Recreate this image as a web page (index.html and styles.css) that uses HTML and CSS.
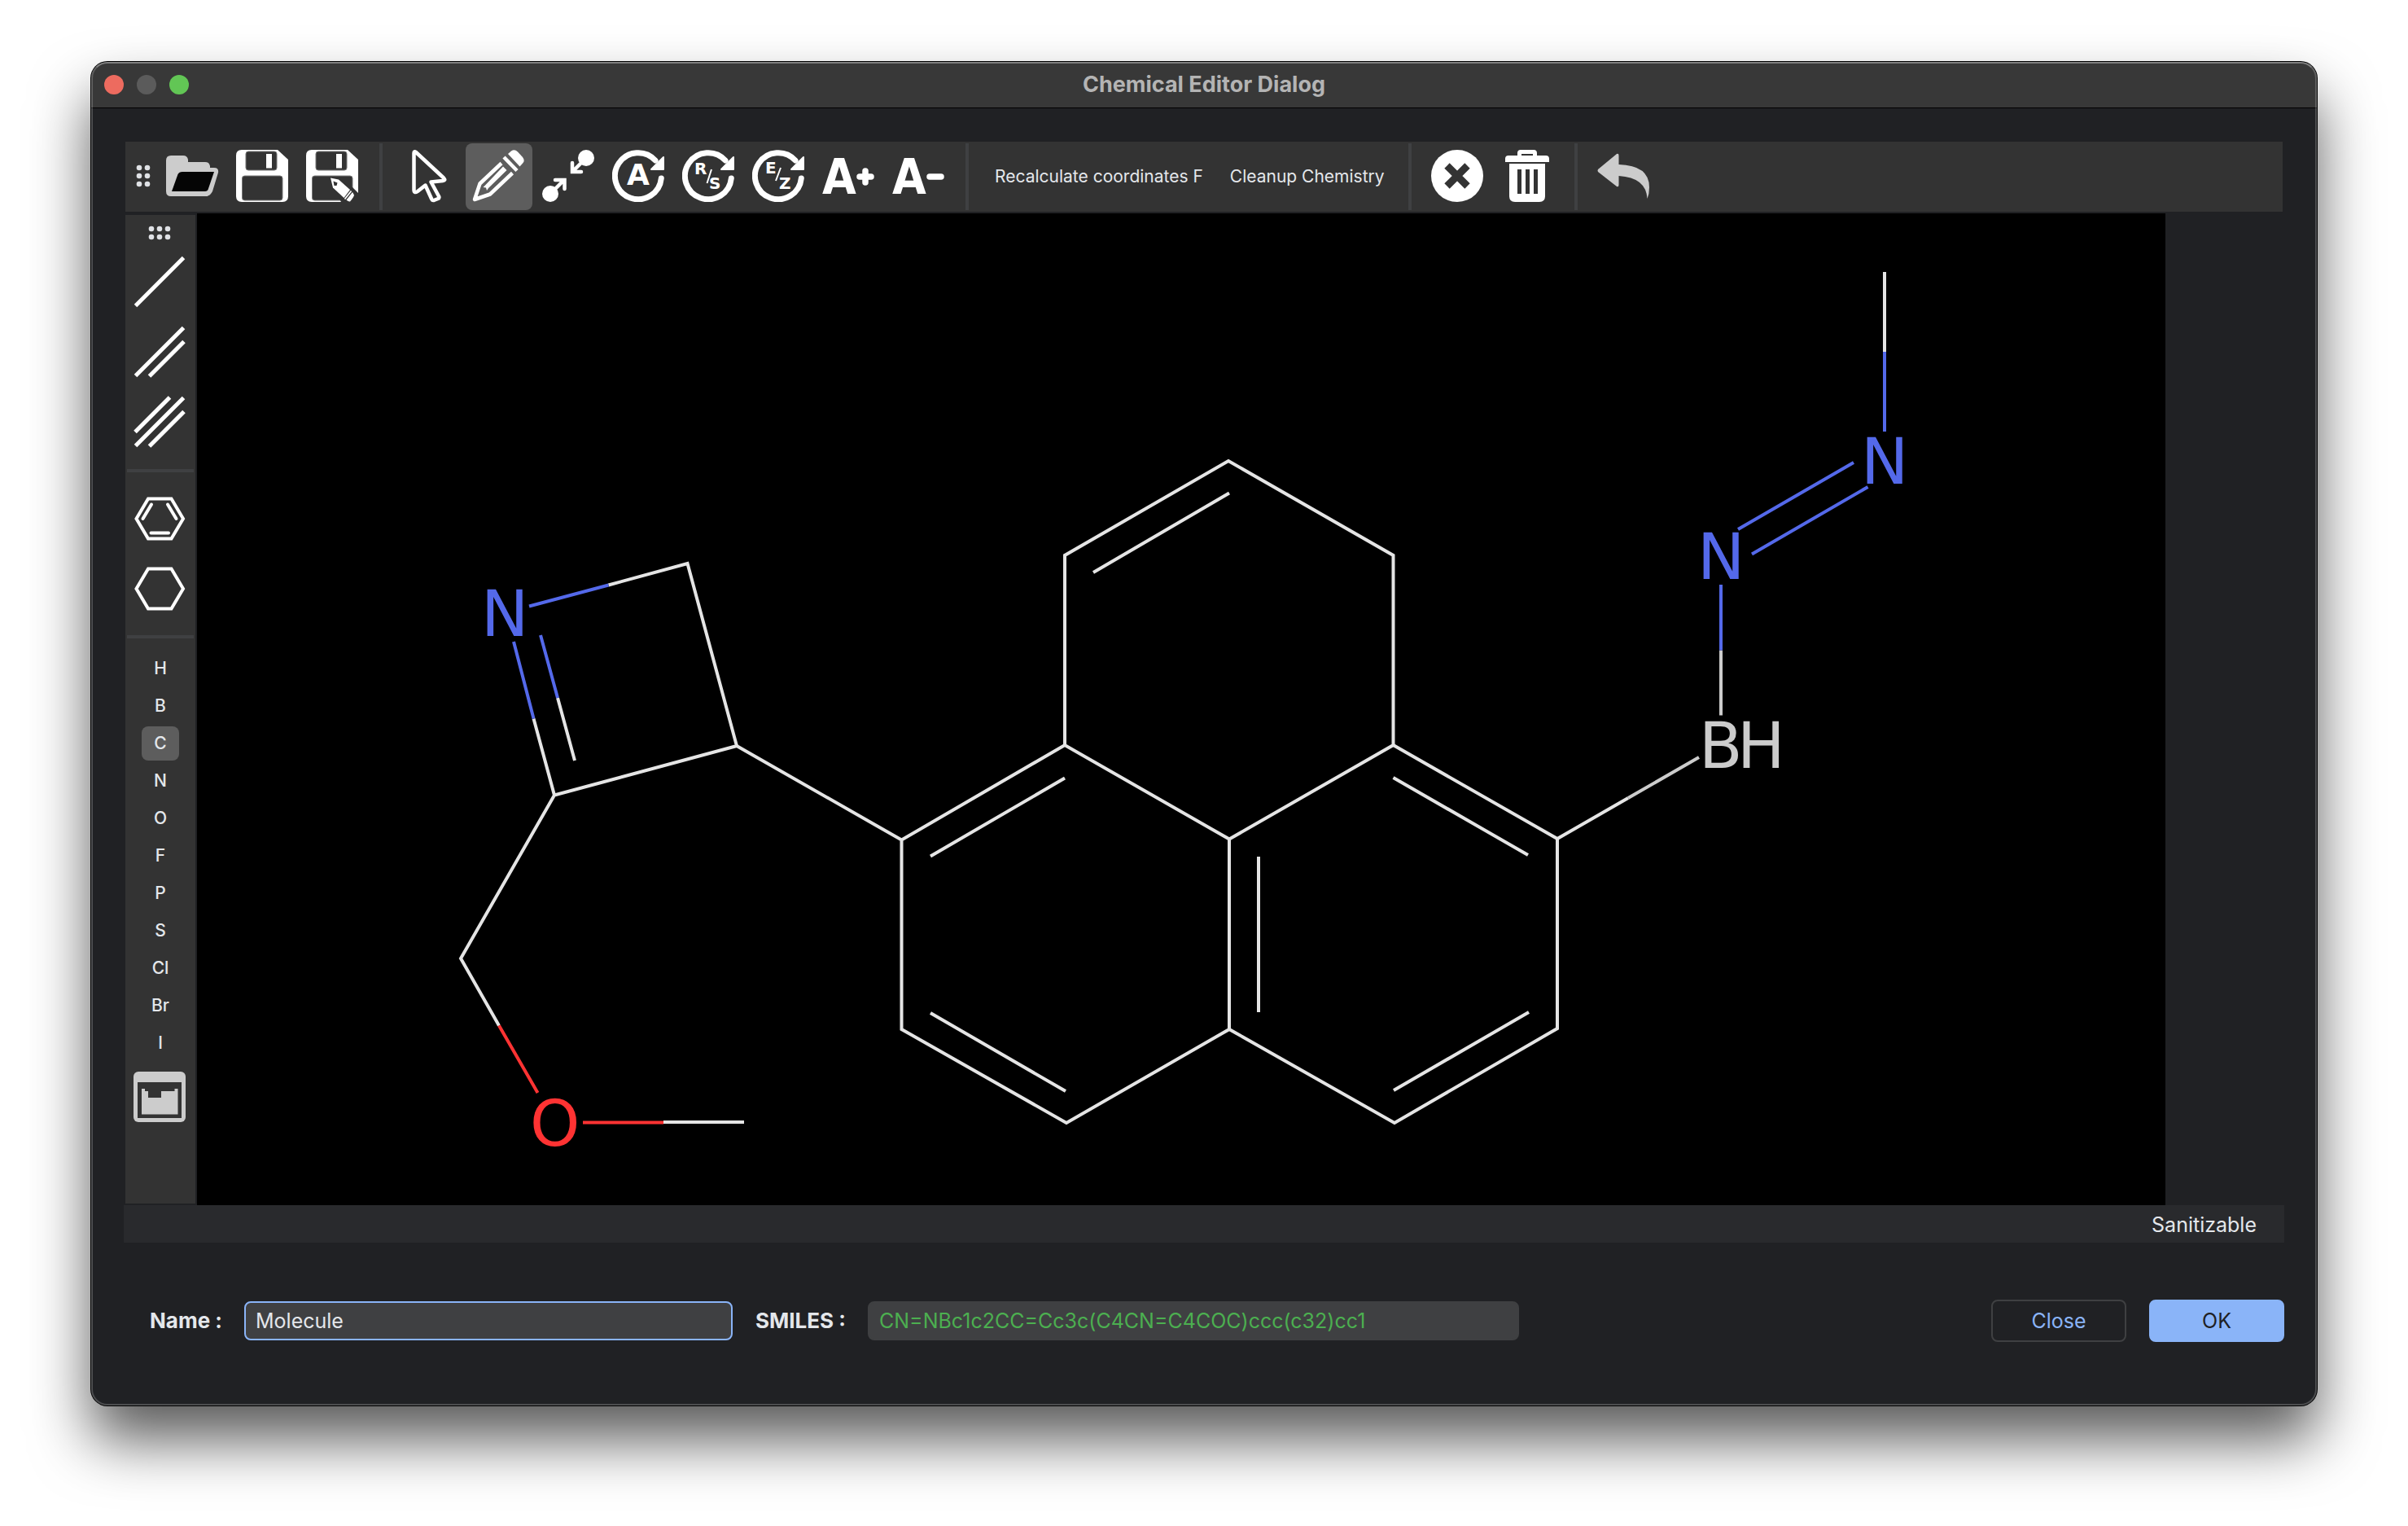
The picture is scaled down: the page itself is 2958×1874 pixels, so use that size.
FILE: index.html
```html
<!DOCTYPE html>
<html lang="en">
<head>
<meta charset="utf-8">
<meta name="viewport" content="width=device-width, initial-scale=1">
<title>Chemical Editor Dialog</title>
<link rel="stylesheet" href="styles.css">
</head>
<body>
<svg class="defs" aria-hidden="true">
  <defs>
    <symbol id="floppy" viewBox="0 0 64 64">
      <path fill="#fff" d="M7 0H51L64 12V57Q64 64 57 64H7Q0 64 0 57V7Q0 0 7 0Z"/>
      <rect x="12" y="2" width="38" height="23" rx="3" fill="#333" stroke="#777" stroke-width="1"/>
      <rect x="37" y="5" width="7" height="17.500" fill="#fff"/>
      <rect x="7.500" y="32" width="49.500" height="30" rx="3" fill="#333" stroke="#777" stroke-width="1"/>
    </symbol>
    <symbol id="rotate" viewBox="0 0 64 64">
      <path fill="none" stroke="#fff" stroke-width="7" stroke-linecap="round" d="M60.300 35A28.500 28.500 0 1 1 53 13"/>
      <path fill="#fff" stroke="#fff" stroke-width="2" stroke-linejoin="round" d="M63 9V24H48Z"/>
    </symbol>
  </defs>
</svg>

<main class="window">
  <header class="titlebar">
    <div class="lights">
      <button class="light light-close" aria-label="Close window"></button>
      <button class="light light-min" aria-label="Minimize window"></button>
      <button class="light light-zoom" aria-label="Zoom window"></button>
    </div>
    <h1 class="title">Chemical Editor Dialog</h1>
  </header>

  <div class="content">
    <div class="toolbar" role="toolbar" aria-label="Editing tools">
      <svg class="grip grip-row" viewBox="0 0 42 86" aria-hidden="true">
        <g fill="#dfe1e5"><circle cx="17" cy="32" r="3.300"/><circle cx="27" cy="32" r="3.300"/><circle cx="17" cy="42" r="3.300"/><circle cx="27" cy="42" r="3.300"/><circle cx="17" cy="52" r="3.300"/><circle cx="27" cy="52" r="3.300"/></g>
      </svg>
      <div class="group">
        <button class="tool" aria-label="Open">
          <svg class="icon" viewBox="0 0 64 64"><path fill="#ccc" d="M6 7H21Q26 7 27 12V15H48Q53 15 54 20V22H59Q65 22 64 28L57 51Q54 57 49 57H6Q0 57 0 51V13Q0 7 6 7Z"/><path fill="#050505" d="M20 27H59L51.500 49Q50.500 51 48 51H7L14.500 30Q16 27 20 27Z"/></svg>
        </button>
        <button class="tool" aria-label="Save"><svg class="icon"><use href="#floppy"/></svg></button>
        <button class="tool" aria-label="Save as">
          <svg class="icon" viewBox="0 0 64 64">
            <use href="#floppy"/>
            <path fill="#333" d="M30 35L57 46L64 53V64H43L40 58Z"/>
            <path fill="#fff" d="M30 34.500L40 36.500L54 49L46.500 59L33 46.500Z"/>
            <path fill="#333" d="M33.500 38.500L38.500 40.500L37.500 44L34.500 44Z"/>
            <path stroke="#fff" stroke-width="1.800" d="M55.500 50.500L47.500 60.500"/>
            <path fill="#fff" d="M57 52L59 55.500Q59 57.500 54 63.500Q52 64 49.500 61.500Z"/>
          </svg>
        </button>
      </div>
      <div class="sep"></div>
      <div class="group">
        <button class="tool" aria-label="Select">
          <svg class="icon" viewBox="0 0 64 64"><path fill="none" stroke="#fff" stroke-width="4.500" stroke-linejoin="round" d="M14.500 4Q14.500 1 17 3L51 34.500Q54 37.500 50 38L35.500 39.500L45 57Q46 59 44 60L39 62Q37 62.500 36 60L28.500 43.500L19 51Q14.500 54 14.500 49Z"/></svg>
        </button>
        <button class="tool tool-active" aria-label="Draw" aria-pressed="true">
          <svg class="icon" viewBox="0 0 64 64">
            <path fill="#fff" d="M44 5L48 1.500Q52-1.500 56 2.500L62 9Q65 13 62.500 16L58.500 20.500Z"/>
            <path fill="none" stroke="#fff" stroke-width="4.500" d="M39 9L55 25.500"/>
            <path fill="none" stroke="#fff" stroke-width="4.500" stroke-linejoin="round" d="M36 16.500L9.500 41.500L3 61L22 54.500L49.500 28.500"/>
            <path fill="#fff" d="M38 20.500L42.500 25L20 47L18 50L17 46.500L13.500 46L16.500 43Z"/>
          </svg>
        </button>
        <button class="tool" aria-label="Merge atoms">
          <svg class="icon" viewBox="0 0 64 64"><g fill="#fff"><circle cx="54" cy="10" r="10"/><circle cx="10" cy="54" r="10"/></g><g fill="none" stroke="#fff" stroke-width="4.500" stroke-linecap="round"><path d="M54 10L38 26M37 16V27H48"/><path d="M10 54L26 38M16 37H27.500V48"/></g></svg>
        </button>
        <button class="tool" aria-label="Change atom">
          <svg class="icon" viewBox="0 0 64 64"><use href="#rotate"/><text class="glyph glyph-lg" x="32" y="43" text-anchor="middle">A</text></svg>
        </button>
        <button class="tool" aria-label="Toggle R/S">
          <svg class="icon" viewBox="0 0 64 64"><use href="#rotate"/><text class="glyph glyph-sm" x="15" y="30">R</text><text class="glyph glyph-sm" x="33" y="48">S</text><path stroke="#fff" stroke-width="2" d="M36 24L30.500 41"/></svg>
        </button>
        <button class="tool" aria-label="Toggle E/Z">
          <svg class="icon" viewBox="0 0 64 64"><use href="#rotate"/><text class="glyph glyph-sm" x="16" y="29">E</text><text class="glyph glyph-sm" x="33" y="48">Z</text><path stroke="#fff" stroke-width="2" d="M35 22L29 38"/></svg>
        </button>
        <button class="tool" aria-label="Increase charge">
          <svg class="icon" viewBox="0 0 64 64"><text class="glyph glyph-xl" x="0" y="54">A</text><path stroke="#fff" stroke-width="7.500" stroke-linecap="round" d="M46 33H60M53 26V40"/></svg>
        </button>
        <button class="tool" aria-label="Decrease charge">
          <svg class="icon" viewBox="0 0 64 64"><text class="glyph glyph-xl" x="0" y="54">A</text><path stroke="#fff" stroke-width="7.500" stroke-linecap="round" d="M46 33H60"/></svg>
        </button>
      </div>
      <div class="sep"></div>
      <div class="group">
        <button class="text-tool">Recalculate coordinates F</button>
        <button class="text-tool">Cleanup Chemistry</button>
      </div>
      <div class="sep"></div>
      <div class="group">
        <button class="tool" aria-label="Delete">
          <svg class="icon" viewBox="0 0 64 64"><circle cx="32" cy="32" r="32" fill="#fff"/><path stroke="#333" stroke-width="9" d="M19.500 19.500L44.500 44.500M44.500 19.500L19.500 44.500"/></svg>
        </button>
        <button class="tool" aria-label="Clear canvas">
          <svg class="icon" viewBox="0 0 64 64"><path fill="#fff" fill-rule="evenodd" d="M20 7V4Q20 0 24 0H40Q44 0 44 4V7H55Q59 7 59 11V15H5V11Q5 7 9 7ZM25 7H39V5H25Z"/><path fill="#fff" d="M10 17H54V57Q54 64 47 64H17Q10 64 10 57Z"/><path stroke="#333" stroke-width="5" d="M22.500 24V54M32.500 24V54M42.500 24V54"/></svg>
        </button>
      </div>
      <div class="sep"></div>
      <div class="group">
        <button class="tool" aria-label="Undo">
          <svg class="icon" viewBox="0 0 64 64"><path fill="#ccc" d="M1 24L24 5Q26.500 4 26.500 7V18Q64 19 64 46Q64 54 61.500 60Q60 34 26.500 32V43Q26.500 46 24 45L1 27Q0 25.500 1 24Z"/></svg>
        </button>
      </div>
    </div>

    <div class="workspace">
      <div class="sidebar" role="toolbar" aria-label="Bonds and elements">
        <svg class="grip grip-col" viewBox="0 0 86 42" aria-hidden="true">
          <g fill="#dfe1e5"><circle cx="32" cy="17" r="3.300"/><circle cx="42" cy="17" r="3.300"/><circle cx="52" cy="17" r="3.300"/><circle cx="32" cy="27" r="3.300"/><circle cx="42" cy="27" r="3.300"/><circle cx="52" cy="27" r="3.300"/></g>
        </svg>
        <div class="stack">
          <button class="tool" aria-label="Single bond"><svg class="icon" viewBox="0 0 64 64"><path stroke="#fff" stroke-width="5" d="M2.500 61.500L61.500 2.500"/></svg></button>
          <button class="tool" aria-label="Double bond"><svg class="icon" viewBox="0 0 64 64"><path stroke="#fff" stroke-width="5" d="M2.500 61.500L61.500 2.500M19.500 62L62 19.500"/></svg></button>
          <button class="tool" aria-label="Triple bond"><svg class="icon" viewBox="0 0 64 64"><path stroke="#fff" stroke-width="5" d="M2.500 61.500L61.500 2.500M19.500 62L62 19.500M2 44.500L44.500 2"/></svg></button>
        </div>
        <div class="rule"></div>
        <div class="stack">
          <button class="tool" aria-label="Benzene"><svg class="icon" viewBox="0 0 64 64"><g fill="none" stroke="#fff" stroke-width="4"><path d="M3.500 33L18 8.500H46.500L61 33L46.500 57.500H18Z"/><path stroke-linecap="round" d="M22 15.500L11.500 33M42 15.500L52.500 33M21.500 50.500H43"/></g></svg></button>
          <button class="tool" aria-label="Cyclohexane"><svg class="icon" viewBox="0 0 64 64"><path fill="none" stroke="#fff" stroke-width="4" d="M3.500 33L18 8.500H46.500L61 33L46.500 57.500H18Z"/></svg></button>
        </div>
        <div class="rule"></div>
        <div class="stack">
          <button class="element">H</button>
          <button class="element">B</button>
          <button class="element tool-active" aria-pressed="true">C</button>
          <button class="element">N</button>
          <button class="element">O</button>
          <button class="element">F</button>
          <button class="element">P</button>
          <button class="element">S</button>
          <button class="element">Cl</button>
          <button class="element">Br</button>
          <button class="element">I</button>
          <button class="tool" aria-label="Periodic table"><svg class="icon" viewBox="0 0 64 64"><rect y="2" width="64" height="62" rx="6" fill="#ccc"/><path fill="#333" d="M5 15H59V59H5Z"/><path fill="#ccc" d="M10 23H14V26H18V34H34V26H50.500V23H54.500V54.500H10Z"/></svg></button>
        </div>
      </div>

      <svg class="canvas" viewBox="242 262 2418 1218" role="img" aria-label="Molecule drawing">
        <g class="bond bond-c">
          <path d="M747.500 718.500L844.500 692L905 916L681 976.500L655.500 882.500M685 857L706 934M681 976.500L566 1177L613 1259.500M815 1378H914"/>
          <path d="M905 916L1107.500 1031.500L1308 915L1510 1030.500V1264L1310 1379L1107.500 1264V1031.500M1143 1051.500L1308 955.500M1546 1052V1243M1143 1244L1309 1340"/>
          <path d="M1308 915V682L1509 566L1711.500 682V915L1510 1030.500M1343 703L1510 605.500"/>
          <path d="M1711.500 915L1913 1030V1263L1713 1379L1510 1264M1711.500 955L1877 1050M1878 1243L1712 1339M1913 1030L2000 980M2315 334V432"/>
        </g>
        <path class="bond bond-b" d="M2000 980L2087 930M2114 798.500V878.500"/>
        <path class="bond bond-n" d="M650 744.500L747.500 718.500M631 788L655.500 882.500M664 780L685 857M2114 718V798.500M2135 650L2277 568M2152 680.500L2294.500 598M2315 432V530"/>
        <path class="bond bond-o" d="M613 1259.500L660.500 1342M716 1378.500H815"/>
        <text class="atom atom-n" x="591" y="781">N</text>
        <text class="atom atom-n" x="2085" y="711">N</text>
        <text class="atom atom-n" x="2286" y="594">N</text>
        <text class="atom atom-b" x="2087 2134" y="943">BH</text>
        <text class="atom atom-o" x="651" y="1407">O</text>
      </svg>
    </div>

    <div class="status" role="status">Sanitizable</div>

    <form class="footer">
      <label class="label label-name" for="name">Name :</label>
      <input class="field field-name" id="name" type="text" value="Molecule">
      <label class="label label-smiles" for="smiles">SMILES :</label>
      <input class="field field-smiles" id="smiles" type="text" value="CN=NBc1c2CC=Cc3c(C4CN=C4COC)ccc(c32)cc1" readonly>
      <div class="actions">
        <button class="action" type="button">Close</button>
        <button class="action action-primary" type="button">OK</button>
      </div>
    </form>
  </div>
</main>
</body>
</html>
```
FILE: styles.css
```css
* {
  box-sizing: border-box;
}

body {
  margin: 0;
  min-height: 100vh;
  padding: 76px 112px 148px;
  display: flex;
  background: #fff;
  color: #e4e7eb;
  font-family: Inter, "Liberation Sans", sans-serif;
  font-size: 25px;
  line-height: 32px;
}

button,
input {
  margin: 0;
  padding: 0;
  border: 0;
  background: none;
  color: inherit;
  font: inherit;
}

.defs {
  position: absolute;
  width: 0;
  height: 0;
}

.window {
  position: relative;
  flex: 1;
  min-width: 0;
  display: flex;
  flex-direction: column;
  border-radius: 20px;
  background: #202124;
  box-shadow: 0 0 0 1px #000, 0 42px 72px rgba(0, 0, 0, 0.65);
}

/* light rim over the window edge */
.window::after {
  content: "";
  position: absolute;
  inset: 0;
  border: 2px solid rgba(255, 255, 255, 0.2);
  border-top-color: rgba(255, 255, 255, 0.36);
  border-radius: 20px;
  pointer-events: none;
}

.titlebar {
  display: grid;
  grid-template-columns: 1fr auto 1fr;
  align-items: center;
  height: 57px;
  padding: 0 16px;
  border-bottom: 1px solid #000;
  border-radius: 20px 20px 0 0;
  background: #383838;
}

.lights {
  display: flex;
  gap: 16px;
}

.light {
  width: 24px;
  height: 24px;
  border-radius: 50%;
}

.light-close { background: #ed6b5f; }
.light-min { background: #5b5b5b; }
.light-zoom { background: #62c655; }

.title {
  margin: 0;
  color: #b4b4b4;
  font-size: 27px;
  font-weight: 700;
}

.content {
  flex: 1;
  display: flex;
  flex-direction: column;
  padding: 41px 40px 78px;
}

.toolbar {
  display: flex;
  align-items: center;
  margin: 0 2px 2px;
  background: #333;
}

.grip {
  display: block;
  flex: none;
}

.grip-row {
  width: 42px;
  height: 86px;
}

.grip-col {
  width: 86px;
  height: 42px;
}

.group {
  display: flex;
  gap: 4px;
}

.sep {
  width: 4px;
  height: 82px;
  margin: 0 16px;
  background: #3f4042;
}

.tool {
  width: 82px;
  height: 82px;
  padding: 8px 10px 10px 8px;
  border-radius: 8px;
}

.tool-active {
  background: #5d5d5d;
}

.icon {
  display: block;
  width: 64px;
  height: 64px;
  overflow: visible;
}

.glyph {
  fill: #fff;
  font-family: "DejaVu Sans", sans-serif;
  font-weight: 700;
}

.glyph-sm { font-size: 20px; }
.glyph-lg { font-size: 36px; }

.glyph-xl {
  font-family: "DejaVu Sans Condensed", "DejaVu Sans", sans-serif;
  font-size: 60px;
}

.text-tool {
  height: 82px;
  padding: 0 13px 0 16px;
  font-size: 21px;
  white-space: nowrap;
}

.workspace {
  flex: 1;
  min-height: 0;
  display: flex;
  gap: 2px;
  padding: 0 146px 0 2px;
}

.sidebar {
  flex: none;
  width: 86px;
  margin: 2px 0;
  background: #333;
}

.stack {
  display: flex;
  flex-direction: column;
  align-items: center;
  gap: 4px;
}

.rule {
  height: 4px;
  margin: 16px 2px;
  background: #3f4042;
}

.element {
  width: 46px;
  height: 42px;
  border-radius: 8px;
  font-size: 21px;
  font-weight: 500;
  text-align: center;
}

/* takes its height from the row, not from the drawing's own ratio */
.canvas {
  display: block;
  flex: 1;
  min-width: 0;
  contain: size;
  background: #000;
}

.bond {
  fill: none;
  stroke-width: 4;
}

.bond-c { stroke: #e5e5e5; }
.bond-b { stroke: #ccc; }
.bond-n { stroke: #5469ea; }
.bond-o { stroke: #f33; }

.atom {
  font-family: "DejaVu Sans", sans-serif;
  font-size: 78px;
}

.atom-n { fill: #5469ea; }
.atom-b { fill: #ccc; }
.atom-o { fill: #f33; }

.status {
  height: 46px;
  padding: 8px 34px 6px;
  background: #292a2d;
  text-align: right;
}

.footer {
  display: flex;
  align-items: center;
  margin-top: 70px;
}

.label {
  flex: none;
  font-size: 26px;
  font-weight: 700;
}

.label-name {
  width: 148px;
  padding-left: 32px;
}

.label-smiles {
  width: 166px;
  padding-left: 28px;
}

.field {
  min-width: 0;
  height: 48px;
  padding: 0 12px;
  border: 2px solid #3f4042;
  border-radius: 8px;
  background: #3f4042;
  outline: none;
}

.field-name {
  flex: 0 1 600px;
  border-color: #8ab4f8;
}

.field-smiles {
  flex: 0 1 800px;
  color: #4caf50;
}

.actions {
  display: flex;
  gap: 28px;
  margin-left: auto;
}

.action {
  width: 166px;
  height: 52px;
  border: 2px solid #3f4042;
  border-radius: 8px;
  color: #8ab4f8;
}

.action-primary {
  border-color: #8ab4f8;
  background: #8ab4f8;
  color: #202124;
}
```
